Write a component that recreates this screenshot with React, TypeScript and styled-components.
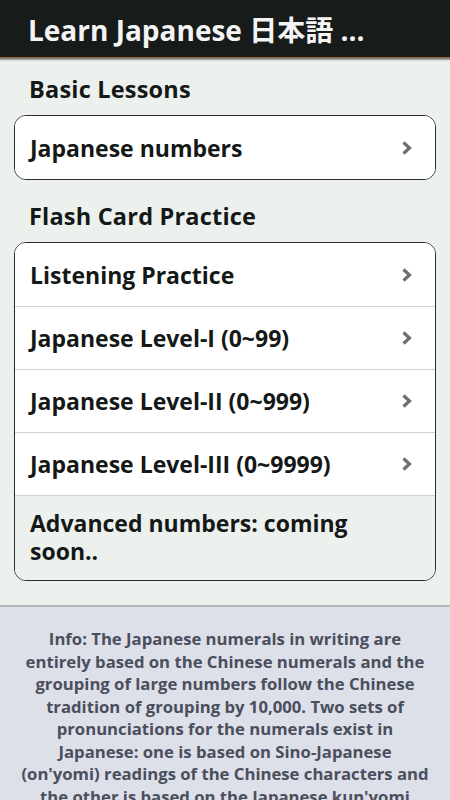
import React from 'react'
import styled, { createGlobalStyle } from 'styled-components'

const GlobalStyle = createGlobalStyle`
  html, body {
    margin: 0;
    padding: 0;
    background: #edf1ee;
    font-family: "Open Sans", "Noto Sans", "Noto Sans CJK JP", sans-serif;
  }
`

const Screen = styled.div`
  width: 450px;
  height: 800px;
  overflow: hidden;
  display: flex;
  flex-direction: column;
  background: #edf1ee;
`

const TitleBar = styled.header`
  flex-shrink: 0;
  height: 57px;
  background: #171b1a;
  display: flex;
  align-items: center;
  padding: 0 28px;
  border-bottom: 1px solid #a0643a;
  box-shadow: 0 1px 0 #7d7f80, 0 2px 0 #a8abab, 0 3px 0 #d4d8d7;
`

const Title = styled.h1`
  margin: 0;
  color: #f4f4f4;
  font-size: 28px;
  font-weight: 700;
  font-family: "Open Sans", "Noto Sans CJK JP", sans-serif;
  padding-top: 1px;
  white-space: nowrap;
`

const Content = styled.main`
  flex-shrink: 0;
  padding: 15px 14px 24px;
  display: flex;
  flex-direction: column;
`

const SectionTitle = styled.h2`
  margin: 0 0 10px 15px;
  font-size: 23.5px;
  font-weight: 700;
  color: #141816;
  height: 32px;
  line-height: 32px;
  letter-spacing: 0.2px;
`

const Card = styled.ul`
  list-style: none;
  margin: 0 0 20px;
  padding: 0;
  background: #fff;
  border: 1px solid #2a2d2c;
  border-radius: 12px;
  overflow: hidden;
  &:last-child {
    margin-bottom: 0;
  }
`

const Row = styled.li<{ $muted?: boolean }>`
  display: flex;
  align-items: center;
  justify-content: space-between;
  min-height: 63px;
  padding: ${p => (p.$muted ? '13px 15px 15px' : '0 22px 0 15px')};
  background: ${p => (p.$muted ? '#edf1ee' : '#fff')};
  font-size: 23px;
  font-weight: 700;
  color: #141816;
  line-height: 28px;
  box-sizing: border-box;
  & + & {
    border-top: 1px solid #cfd2d1;
  }
`

const Chevron = () => (
  <svg width="12" height="16" viewBox="0 0 12 16">
    <path d="M2.5 2.5 L8.5 8 L2.5 13.5" fill="none" stroke="#6d6f6f" strokeWidth="3.2" />
  </svg>
)

const Info = styled.footer`
  flex: 1;
  background: #dddfe9;
  border-top: 2px solid #b5b8bd;
  padding: 21px 18px 0;
  text-align: center;
  color: #4a4f5d;
  font-size: 16.7px;
  font-weight: 700;
  line-height: 22.5px;
`

export default function App() {
  return (
    <Screen>
      <GlobalStyle />
      <TitleBar>
        <Title>Learn Japanese 日本語 ...</Title>
      </TitleBar>
      <Content>
        <SectionTitle>Basic Lessons</SectionTitle>
        <Card>
          <Row>Japanese numbers <Chevron /></Row>
        </Card>
        <SectionTitle>Flash Card Practice</SectionTitle>
        <Card>
          <Row>Listening Practice <Chevron /></Row>
          <Row>Japanese Level-I (0~99) <Chevron /></Row>
          <Row>Japanese Level-II (0~999) <Chevron /></Row>
          <Row>Japanese Level-III (0~9999) <Chevron /></Row>
          <Row $muted>Advanced numbers: coming soon..</Row>
        </Card>
      </Content>
      <Info>
        Info: The Japanese numerals in writing are entirely based on the Chinese numerals and the
        grouping of large numbers follow the Chinese tradition of grouping by 10,000. Two sets of
        pronunciations for the numerals exist in Japanese: one is based on Sino-Japanese (on'yomi)
        readings of the Chinese characters and the other is based on the Japanese kun'yomi
        readings.
      </Info>
    </Screen>
  )
}
